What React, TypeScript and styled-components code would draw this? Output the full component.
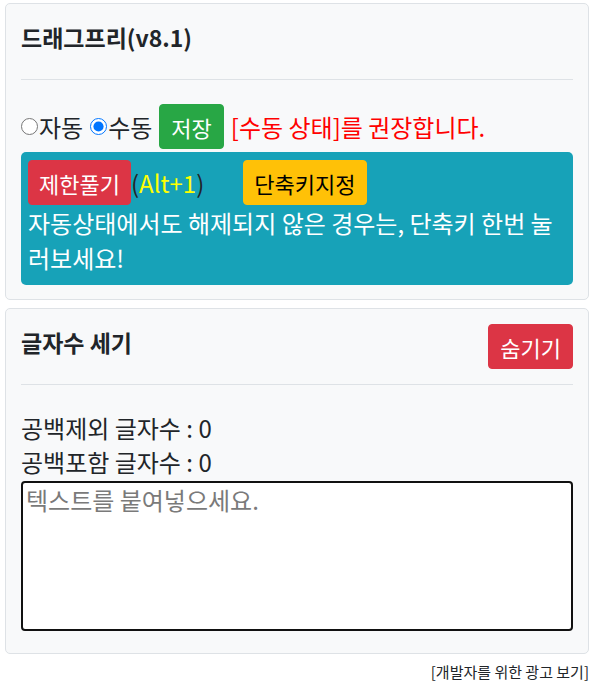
import React, { useState } from "react"
import styled, { createGlobalStyle } from "styled-components"

const GlobalStyle = createGlobalStyle`
  html, body {
    margin: 0;
    padding: 0;
    background: #ffffff;
  }
  body {
    font-family: "Noto Sans CJK KR", "Noto Sans", sans-serif;
    font-size: 24px;
    line-height: 1.4;
    color: #212529;
  }
`

const Page = styled.div`
  padding: 3px 1px 0 5px;
  display: flex;
  flex-direction: column;
  gap: 8px;
`

const Card = styled.section`
  background: #f8f9fa;
  border: 1px solid #dee2e6;
  border-radius: 5px;
  padding: 15px 15px 14px;
`

const CardHeader = styled.div`
  display: flex;
  align-items: center;
  justify-content: space-between;
  height: 45px;
`

const Title = styled.h2`
  margin: 0 0 8px;
  font-size: 23px;
  font-weight: 700;
  line-height: 1.2;
`

const Divider = styled.hr`
  border: 0;
  border-top: 1px solid #dee2e6;
  margin: 15px 0 0;
`

const ModeRow = styled.div`
  display: flex;
  align-items: center;
  margin-top: 24px;
  white-space: nowrap;
`

const ModeLabel = styled.label`
  display: inline-flex;
  align-items: center;
  margin-right: 7px;
  cursor: pointer;
`

const Radio = styled.input`
  width: 17px;
  height: 17px;
  margin: 0 1px 0 0;
  accent-color: #0075ff;
`

const Button = styled.button<{ $bg: string; $fg?: string; $px?: number }>`
  height: 45px;
  padding: 0 ${({ $px }) => $px ?? 10}px;
  border: 1px solid ${({ $bg }) => $bg};
  border-radius: 4px;
  background: ${({ $bg }) => $bg};
  color: ${({ $fg }) => $fg ?? "#ffffff"};
  font-family: inherit;
  font-size: 22px;
  line-height: 1;
  cursor: pointer;
`

const Notice = styled.span`
  margin-left: 7px;
  color: #ff0000;
`

const InfoBox = styled.div`
  margin-top: 3px;
  background: #17a2b8;
  border-radius: 5px;
  padding: 8px 7px 10px;
  color: #ffffff;
  line-height: 35px;
`

const ShortcutRow = styled.div`
  display: flex;
  align-items: center;
  height: 45px;
`

const Hotkey = styled.span`
  color: #212529;
  margin-right: 39px;
`

const Yellow = styled.span`
  color: #ffff00;
`

const CountList = styled.div`
  margin-top: 26px;
  line-height: 34px;
`

const TextBox = styled.textarea`
  display: block;
  box-sizing: border-box;
  width: 100%;
  height: 150px;
  margin: 2px 0 8px;
  padding: 0 3px;
  border: 2px solid #111111;
  border-radius: 4px;
  background: #ffffff;
  font-family: inherit;
  font-size: 24px;
  line-height: 1.4;
  color: #212529;
  resize: none;
  outline: none;
  &::placeholder {
    color: #7a7a7a;
  }
`

const Footer = styled.div`
  text-align: right;
  font-size: 15px;
  line-height: 21px;
  margin-top: 7px;
  padding-right: 1px;
  color: #212529;
`

export default function App() {
  const [mode, setMode] = useState("manual")
  const [text, setText] = useState("")

  const withoutSpaces = text.replace(/\s/g, "").length
  const withSpaces = text.length

  return (
    <>
      <GlobalStyle />
      <Page>
        <Card>
          <CardHeader>
            <Title>드래그프리(v8.1)</Title>
          </CardHeader>
          <Divider />
          <ModeRow>
            <ModeLabel>
              <Radio type="radio" name="mode" checked={mode === "auto"} onChange={() => setMode("auto")} />
              자동
            </ModeLabel>
            <ModeLabel>
              <Radio type="radio" name="mode" checked={mode === "manual"} onChange={() => setMode("manual")} />
              수동
            </ModeLabel>
            <Button $bg="#28a745" $px={11}>
              저장
            </Button>
            <Notice>[수동 상태]를 권장합니다.</Notice>
          </ModeRow>
          <InfoBox>
            <ShortcutRow>
              <Button $bg="#dc3545">제한풀기</Button>
              <Hotkey>
                (<Yellow>Alt+1</Yellow>)
              </Hotkey>
              <Button $bg="#ffc107" $fg="#000000">
                단축키지정
              </Button>
            </ShortcutRow>
            자동상태에서도 해제되지 않은 경우는, 단축키 한번 눌러보세요!
          </InfoBox>
        </Card>

        <Card>
          <CardHeader>
            <Title>글자수 세기</Title>
            <Button $bg="#dc3545" $px={11}>
              숨기기
            </Button>
          </CardHeader>
          <Divider />
          <CountList>
            <div>공백제외 글자수 : {withoutSpaces}</div>
            <div>공백포함 글자수 : {withSpaces}</div>
          </CountList>
          <TextBox
            placeholder="텍스트를 붙여넣으세요."
            value={text}
            onChange={e => setText(e.target.value)}
            autoFocus
          />
        </Card>
      </Page>
      <Footer>[개발자를 위한 광고 보기]</Footer>
    </>
  )
}
